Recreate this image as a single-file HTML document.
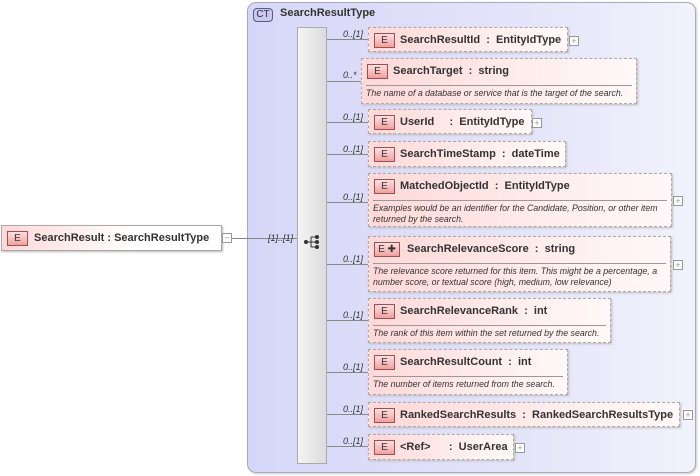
<!DOCTYPE html>
<html><head><meta charset="utf-8"><style>
*{margin:0;padding:0;box-sizing:border-box}
body{width:700px;height:476px;background:#fff;position:relative;overflow:hidden;font-family:"Liberation Sans",Arial,sans-serif;}
.ct{position:absolute;left:247px;top:2px;width:449px;height:471px;border:1px solid #a8a8c0;border-radius:9px;background:linear-gradient(90deg,#d6d6f8 0%,#e4e4fa 60%,#f2f2fc 100%);box-shadow:1px 1px 2px #ccc}
.ctb{position:absolute;left:253px;top:8px;width:20px;height:14px;border:1px solid #5a5a80;border-radius:4px;background:#c8c8f0;font-size:10px;text-align:center;line-height:12px;color:#333}
.ctt{position:absolute;left:280px;top:7px;font-size:11px;font-weight:bold;color:#333}
.bar{position:absolute;left:297px;top:27px;width:30px;height:437px;border:1px solid #aaa;background:linear-gradient(90deg,#f4f4f4,#dcdcdc)}
.el{position:absolute;border:1px dashed #aaa;background:linear-gradient(90deg,#ffd8d8,#fff0f0 70%,#fff8f8);box-shadow:1px 1px 2px #bbb}
.el.solid{border:1px solid #aaa}
.e{position:absolute;left:5px;top:5px;width:21px;height:15px;border:1px solid #a05050;background:linear-gradient(#ffe0e0,#f0a0a0);font-size:10px;text-align:center;line-height:13px;color:#333}
.n{position:absolute;left:31px;top:6px;font-size:11px;font-weight:bold;color:#333;white-space:pre}
.d{position:absolute;left:4px;right:4px;top:26px;border-top:1px solid #999;padding-top:2px;font-size:8.8px;font-style:italic;color:#333;line-height:11px}
.l{position:absolute;height:1px;background:#888}
.lab{position:absolute;font-size:9px;font-style:italic;color:#333}
.pl{position:absolute;width:10px;height:10px;border:1px solid #999;background:#fff;font-size:9px;line-height:8px;text-align:center;color:#999}
</style></head><body>
<div class="ct"></div>
<div class="ctb">CT</div><div class="ctt">SearchResultType</div>
<div class="l" style="left:232px;top:238px;width:65px"></div>
<div class="lab" style="left:268px;top:233px">[1]..[1]</div>
<div class="el solid" style="left:1px;top:225px;width:221px;height:26px;background:linear-gradient(90deg,#ffd8d8,#fff 60%)"><div class="e">E</div><div class="n" style="left:32px">SearchResult : SearchResultType</div></div>
<div class="pl" style="left:222px;top:233px;line-height:7px">–</div>
<div class="bar"></div>
<svg style="position:absolute;left:303px;top:234px" width="20" height="16"><line x1="2" y1="8" x2="8" y2="8" stroke="#333"/><line x1="8" y1="3" x2="8" y2="13" stroke="#333"/><line x1="8" y1="3" x2="14" y2="3" stroke="#333"/><line x1="8" y1="8" x2="14" y2="8" stroke="#333"/><line x1="8" y1="13" x2="14" y2="13" stroke="#333"/><circle cx="3" cy="8" r="2" fill="#333"/><circle cx="14" cy="3" r="2" fill="#333"/><circle cx="14" cy="8" r="2" fill="#333"/><circle cx="14" cy="13" r="2" fill="#333"/></svg>

<div class="l" style="left:327px;top:39px;width:41px"></div><div class="lab" style="left:343px;top:29px">0..[1]</div>
<div class="el" style="left:368px;top:27px;width:200px;height:25px"><div class="e">E</div><div class="n">SearchResultId  :  EntityIdType</div></div><div class="pl" style="left:569px;top:36px">+</div>

<div class="l" style="left:327px;top:81px;width:34px"></div><div class="lab" style="left:343px;top:70px">0..*</div>
<div class="el" style="left:361px;top:58px;width:276px;height:46px"><div class="e">E</div><div class="n">SearchTarget  :  string</div><div class="d">The name of a database or service that is the target of the search.</div></div>

<div class="l" style="left:327px;top:122px;width:41px"></div><div class="lab" style="left:343px;top:112px">0..[1]</div>
<div class="el" style="left:368px;top:109px;width:164px;height:25px"><div class="e">E</div><div class="n">UserId     :  EntityIdType</div></div><div class="pl" style="left:532px;top:118px">+</div>

<div class="l" style="left:327px;top:154px;width:41px"></div><div class="lab" style="left:343px;top:144px">0..[1]</div>
<div class="el" style="left:368px;top:141px;width:198px;height:26px"><div class="e">E</div><div class="n">SearchTimeStamp  :  dateTime</div></div>

<div class="l" style="left:327px;top:202px;width:41px"></div><div class="lab" style="left:343px;top:192px">0..[1]</div>
<div class="el" style="left:368px;top:173px;width:304px;height:54px"><div class="e">E</div><div class="n">MatchedObjectId  :  EntityIdType</div><div class="d">Examples would be an identifier for the Candidate, Position, or other item returned by the search.</div></div><div class="pl" style="left:673px;top:196px">+</div>

<div class="l" style="left:327px;top:264px;width:41px"></div><div class="lab" style="left:343px;top:254px">0..[1]</div>
<div class="el" style="left:368px;top:236px;width:303px;height:56px"><div class="e" style="width:26px">E ✚</div><div class="n" style="left:38px">SearchRelevanceScore  :  string</div><div class="d">The relevance score returned for this item. This might be a percentage, a number score, or textual score (high, medium, low relevance)</div></div><div class="pl" style="left:673px;top:260px">+</div>

<div class="l" style="left:327px;top:320px;width:41px"></div><div class="lab" style="left:343px;top:310px">0..[1]</div>
<div class="el" style="left:368px;top:298px;width:243px;height:45px"><div class="e">E</div><div class="n">SearchRelevanceRank  :  int</div><div class="d">The rank of this item within the set returned by the search.</div></div>

<div class="l" style="left:327px;top:372px;width:41px"></div><div class="lab" style="left:343px;top:362px">0..[1]</div>
<div class="el" style="left:368px;top:349px;width:200px;height:46px"><div class="e">E</div><div class="n">SearchResultCount  :  int</div><div class="d">The number of items returned from the search.</div></div>

<div class="l" style="left:327px;top:414px;width:41px"></div><div class="lab" style="left:343px;top:404px">0..[1]</div>
<div class="el" style="left:368px;top:402px;width:312px;height:25px"><div class="e">E</div><div class="n">RankedSearchResults  :  RankedSearchResultsType</div></div><div class="pl" style="left:683px;top:410px">+</div>

<div class="l" style="left:327px;top:446px;width:41px"></div><div class="lab" style="left:343px;top:436px">0..[1]</div>
<div class="el" style="left:368px;top:434px;width:146px;height:26px"><div class="e">E</div><div class="n">&lt;Ref&gt;      :  UserArea</div></div><div class="pl" style="left:515px;top:443px">+</div>
</body></html>
